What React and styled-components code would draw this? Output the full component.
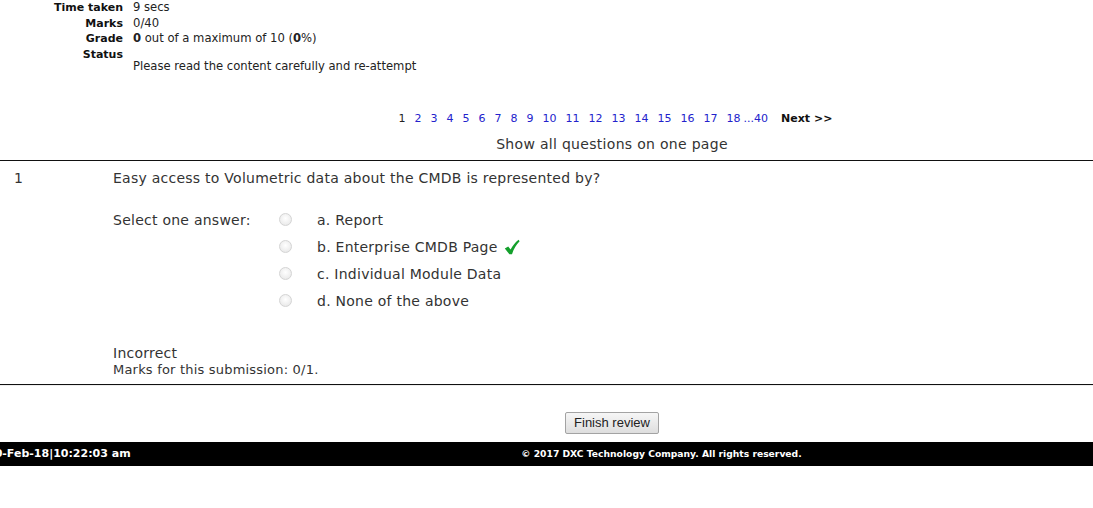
import React from "react";
import styled, { createGlobalStyle } from "styled-components";

const GlobalStyle = createGlobalStyle`
  html, body {
    margin: 0;
    padding: 0;
    background: #fff;
    overflow: hidden;
  }
  body {
    font-family: "DejaVu Sans", Verdana, sans-serif;
    color: #333;
  }
`;

const Page = styled.div`
  width: 1224px;
`;

// 요약 테이블
const Summary = styled.div`
  display: grid;
  grid-template-columns: 123px auto;
  column-gap: 10px;
  font-size: 11.6px;
  line-height: 15.7px;
  color: #222;
`;

const Label = styled.div`
  text-align: right;
  font-weight: bold;
  font-size: 11px;
  color: #111;
`;

const Value = styled.div`
  padding-top: ${(p) => (p.$drop ? "12px" : "0")};
`;

const Pager = styled.div`
  display: flex;
  justify-content: center;
  align-items: center;
  gap: 9px;
  margin-top: 37px;
  padding-left: 7px;
  font-size: 11px;
  line-height: 14px;
`;

const PageLink = styled.span`
  color: ${(p) => (p.$current ? "#222" : "#2222cc")};
  margin-left: ${(p) => (p.$tight ? "-6px" : "0")};
`;

const NextLink = styled.span`
  margin-left: 4px;
  font-weight: bold;
  color: #111;
`;

const ShowAll = styled.div`
  text-align: center;
  margin-top: 9px;
  font-size: 14px;
  letter-spacing: 0.3px;
  line-height: 18px;
  color: #333;
`;

const Question = styled.div`
  border-top: 1px solid #111;
  border-bottom: 1px solid #111;
  margin-top: 7px;
  display: grid;
  grid-template-columns: 113px auto;
  padding: 8px 0 6px;
  font-size: 14px;
  letter-spacing: 0.25px;
  line-height: 18px;
`;

const Number = styled.div`
  padding-left: 14px;
`;

const Content = styled.div``;

const Answer = styled.div`
  display: grid;
  grid-template-columns: 166px auto;
  margin-top: 24px;
`;

const Options = styled.div`
  display: flex;
  flex-direction: column;
  gap: 9px;
`;

const Option = styled.div`
  display: flex;
  align-items: center;
`;

const Radio = styled.span`
  width: 11px;
  height: 11px;
  border-radius: 50%;
  border: 1px solid #d4d4d4;
  background: radial-gradient(circle at 50% 40%, #fff 0%, #ececec 70%, #dcdcdc 100%);
  margin-right: 25px;
  flex-shrink: 0;
`;

const Check = styled.svg`
  margin-left: 6px;
  width: 16px;
  height: 16px;
`;

const Feedback = styled.div`
  margin-top: 34px;
`;

const Marks = styled.div`
  font-size: 13px;
  letter-spacing: 0.2px;
  line-height: 16px;
`;

const Divider = styled.div`
  height: 1px;
  background: #eee;
`;

const ButtonRow = styled.div`
  display: flex;
  justify-content: center;
  padding: 26px 0 8px;
`;

const Button = styled.button`
  font-family: "Liberation Sans", Arial, sans-serif;
  font-size: 13px;
  color: #222;
  height: 22px;
  padding: 0 8px;
  border: 1px solid #a3a3a3;
  border-radius: 2px;
  background: linear-gradient(#f6f6f6, #dedede);
`;

const Footer = styled.div`
  width: 1093px;
  height: 24px;
  background: #000;
  color: #fff;
  display: flex;
  align-items: center;
  font-weight: bold;
  overflow: hidden;
`;

const Clock = styled.div`
  width: 230px;
  flex-shrink: 0;
  font-size: 11px;
  margin-left: -13px;
  white-space: nowrap;
`;

const Copy = styled.div`
  flex: 1;
  text-align: center;
  font-size: 9.2px;
  margin-left: 13px;
  white-space: nowrap;
`;

const pages = [2, 3, 4, 5, 6, 7, 8, 9, 10, 11, 12, 13, 14, 15, 16, 17, 18];

const App = () => {
  return (
    <Page>
      <GlobalStyle />
      <Summary>
        <Label>Time taken</Label>
        <Value>9 secs</Value>
        <Label>Marks</Label>
        <Value>0/40</Value>
        <Label>Grade</Label>
        <Value>
          <b>0</b> out of a maximum of 10 (<b>0</b>%)
        </Value>
        <Label>Status</Label>
        <Value $drop>Please read the content carefully and re-attempt</Value>
      </Summary>

      <Pager>
        <PageLink $current>1</PageLink>
        {pages.map((n) => (
          <PageLink key={n}>{n}</PageLink>
        ))}
        <PageLink $tight>...40</PageLink>
        <NextLink>Next &gt;&gt;</NextLink>
      </Pager>
      <ShowAll>Show all questions on one page</ShowAll>

      <Question>
        <Number>1</Number>
        <Content>
          <div>Easy access to Volumetric data about the CMDB is represented by?</div>
          <Answer>
            <div>Select one answer:</div>
            <Options>
              <Option>
                <Radio />
                a. Report
              </Option>
              <Option>
                <Radio />
                b. Enterprise CMDB Page
                <Check viewBox="0 0 16 16">
                  <path d="M0.8 9.4 L4.2 7.4 L6.6 10.6 C8.6 6.6 11.2 3.4 14.6 0.8 L15.6 2.2 C12.2 5.6 9.8 9.6 8 15.2 L5.4 15.2 Z" fill="#14a02c" />
                </Check>
              </Option>
              <Option>
                <Radio />
                c. Individual Module Data
              </Option>
              <Option>
                <Radio />
                d. None of the above
              </Option>
            </Options>
          </Answer>
          <Feedback>Incorrect</Feedback>
          <Marks>Marks for this submission: 0/1.</Marks>
        </Content>
      </Question>
      <Divider />

      <ButtonRow>
        <Button>Finish review</Button>
      </ButtonRow>

      <Footer>
        <Clock>20-Feb-18|10:22:03 am</Clock>
        <Copy>© 2017 DXC Technology Company. All rights reserved.</Copy>
      </Footer>
    </Page>
  );
};

export default App;
